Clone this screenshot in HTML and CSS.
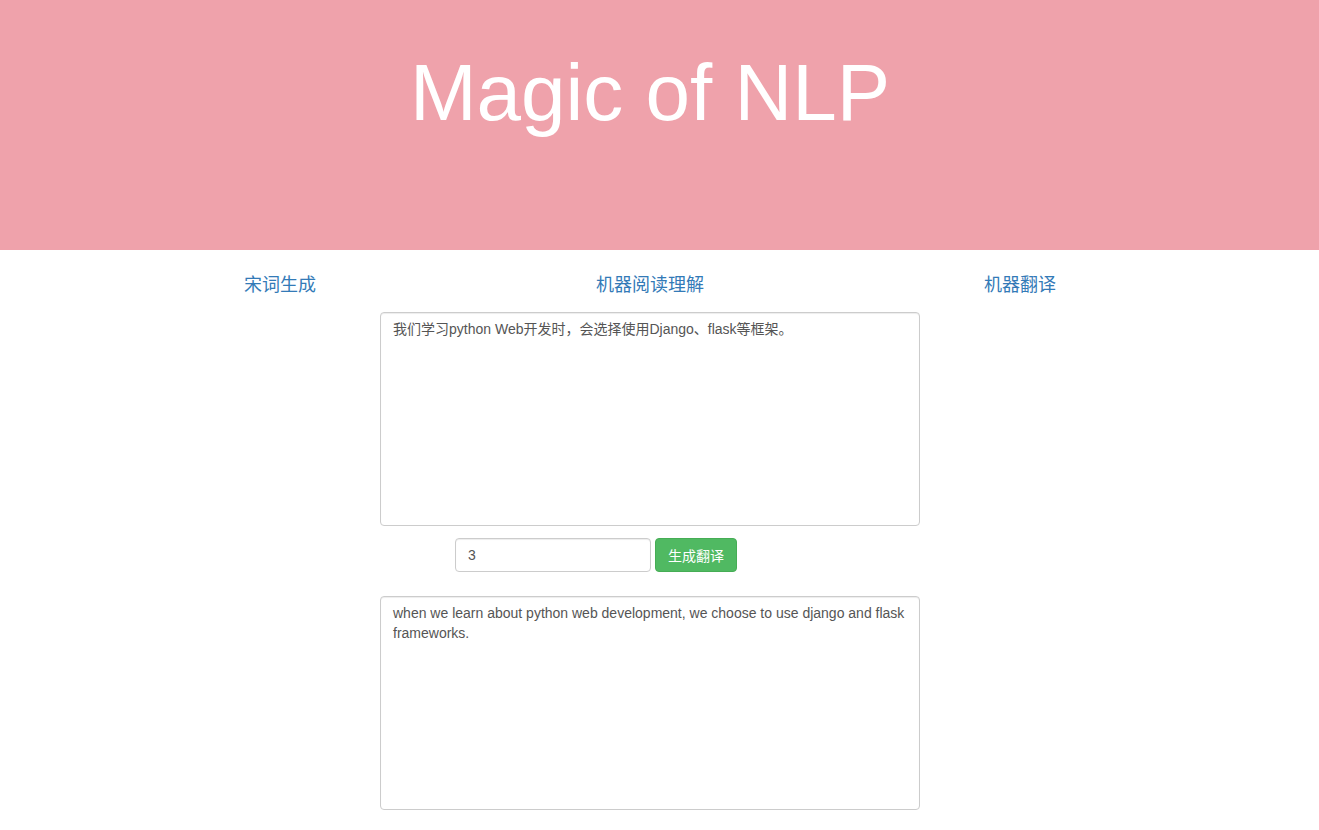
FILE: index.html
```html
<!DOCTYPE html>
<html lang="zh">
<head>
<meta charset="utf-8">
<title>Magic of NLP</title>
<link rel="stylesheet" href="styles.css">
</head>
<body>
<header class="hero">
  <h1 class="hero-title">Magic of NLP</h1>
</header>
<div class="page">
  <nav class="tabs">
    <a class="tab" href="#">宋词生成</a>
    <a class="tab" href="#">机器阅读理解</a>
    <a class="tab" href="#">机器翻译</a>
  </nav>
  <main class="panel">
    <textarea class="box" readonly>我们学习python Web开发时，会选择使用Django、flask等框架。</textarea>
    <div class="controls">
      <input class="field" type="text" value="3">
      <button class="btn" type="button">生成翻译</button>
    </div>
    <textarea class="box box-out" readonly>when we learn about python web development, we choose to use django and flask frameworks.</textarea>
  </main>
</div>
</body>
</html>
```

FILE: styles.css
```css
html, body {
  margin: 0;
  padding: 0;
  background: #fff;
}
body {
  font-family: "Liberation Sans", Arial, "Noto Sans CJK SC", sans-serif;
  font-size: 14px;
  color: #333;
}
.hero {
  height: 250px;
  box-sizing: border-box;
  padding: 49px 19px 0 0;
  background: #efa2ab;
}
.hero-title {
  margin: 0;
  text-align: center;
  color: #fff;
  font-family: "Liberation Sans", Arial, sans-serif;
  font-weight: normal;
  font-size: 80px;
  line-height: 88px;
}
.page {
  padding-right: 19px;
}
.tabs {
  display: flex;
  justify-content: center;
  margin-top: 20px;
  height: 30px;
}
.tab {
  width: 370px;
  text-align: center;
  font-size: 18px;
  line-height: 30px;
  color: #337ab7;
  text-decoration: none;
  font-family: "Liberation Sans", Arial, "Noto Sans CJK SC", sans-serif;
}
.panel {
  width: 540px;
  margin: 12px auto 0;
  display: flex;
  flex-direction: column;
}
.box {
  display: block;
  box-sizing: border-box;
  width: 540px;
  height: 214px;
  margin: 0;
  padding: 6px 12px;
  border: 1px solid #ccc;
  border-radius: 4px;
  resize: none;
  font-family: "Liberation Sans", Arial, "Noto Sans CJK SC", sans-serif;
  font-size: 14px;
  line-height: 20px;
  color: #555;
  background: #fff;
  box-shadow: inset 0 1px 1px rgba(0,0,0,.075);
  outline: none;
  overflow: hidden;
}
.controls {
  display: flex;
  gap: 4px;
  margin: 12px 0 24px;
  padding-left: 75px;
}
.field {
  box-sizing: border-box;
  width: 196px;
  height: 34px;
  margin: 0;
  padding: 6px 12px;
  border: 1px solid #ccc;
  border-radius: 4px;
  font-family: "Liberation Sans", Arial, sans-serif;
  font-size: 14px;
  color: #555;
  box-shadow: inset 0 1px 1px rgba(0,0,0,.075);
  outline: none;
}
.btn {
  box-sizing: border-box;
  width: 82px;
  height: 34px;
  margin: 0;
  padding: 6px 12px;
  border: 1px solid #46ad55;
  border-radius: 4px;
  background: #50b962;
  color: #fff;
  font-family: "Noto Sans CJK SC", sans-serif;
  font-size: 14px;
  line-height: 20px;
  cursor: pointer;
}
```
